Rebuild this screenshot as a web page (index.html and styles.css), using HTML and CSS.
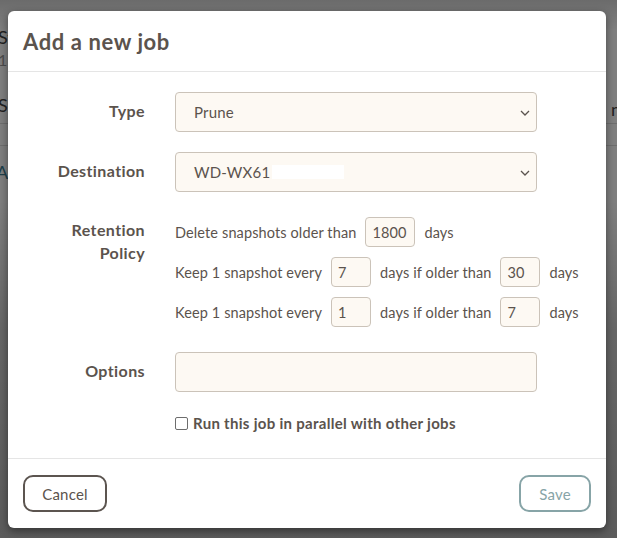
FILE: index.html
```html
<!DOCTYPE html>
<html>
<head>
<meta charset="utf-8">
<link rel="stylesheet" href="styles.css">
</head>
<body>
<div class="page">
  <div class="bg-left">
    <div class="bg-t1">St</div>
    <div class="bg-t2">1</div>
    <div class="bg-t3">Se</div>
    <div class="bg-line"></div>
    <div class="bg-line"></div>
    <div class="bg-t4">Ac</div>
  </div>
  <div class="bg-right">
    <div class="bg-r1">n</div>
  </div>
</div>
<div class="overlay"></div>
<div class="modal">
  <div class="modal-header">
    <h1 class="title">Add a new job</h1>
  </div>
  <div class="modal-body">
    <div class="row">
      <label class="label">Type</label>
      <div class="field">
        <div class="select"><span>Prune</span>
          <svg class="chev" viewBox="0 0 10 6" width="10" height="6"><path d="M1 1l4 4 4-4" fill="none" stroke="#5a534e" stroke-width="1.3"/></svg>
        </div>
      </div>
    </div>
    <div class="row">
      <label class="label">Destination</label>
      <div class="field">
        <div class="select"><span>WD-WX61</span><span class="redact"></span>
          <svg class="chev" viewBox="0 0 10 6" width="10" height="6"><path d="M1 1l4 4 4-4" fill="none" stroke="#5a534e" stroke-width="1.3"/></svg>
        </div>
      </div>
    </div>
    <div class="row row-ret">
      <label class="label label-ret">Retention Policy</label>
      <div class="ret">
        <div class="ret-line"><span>Delete snapshots older than</span><span class="num w50">1800</span><span>days</span></div>
        <div class="ret-line"><span>Keep 1 snapshot every</span><span class="num w40">7</span><span>days if older than</span><span class="num w40">30</span><span>days</span></div>
        <div class="ret-line"><span>Keep 1 snapshot every</span><span class="num w40">1</span><span>days if older than</span><span class="num w40">7</span><span>days</span></div>
      </div>
    </div>
    <div class="row row-opt">
      <label class="label">Options</label>
      <div class="field"><div class="select"></div></div>
    </div>
    <div class="check-row">
      <span class="checkbox"></span>
      <span class="check-text">Run this job in parallel with other jobs</span>
    </div>
  </div>
  <div class="modal-footer">
    <button class="btn btn-cancel">Cancel</button>
    <button class="btn btn-save">Save</button>
  </div>
</div>
</body>
</html>
```
FILE: styles.css
```css
* { box-sizing: border-box; }
html, body { margin: 0; padding: 0; }
body {
  width: 617px;
  height: 538px;
  overflow: hidden;
  position: relative;
  background: #ffffff;
  font-family: Lato, "Open Sans", sans-serif;
  color: #5b534d;
}
.page {
  position: absolute;
  inset: 0;
  background: #fff;
}
.bg-left {
  position: absolute;
  left: 0;
  top: 0;
  width: 40px;
  font-size: 18px;
  color: #444;
}
.bg-t1 { position: absolute; top: 26px; left: -2px; }
.bg-t2 { position: absolute; top: 50px; left: -2px; color: #999; font-size: 16px; }
.bg-t3 { position: absolute; top: 94px; left: -2px; }
.bg-t4 { position: absolute; top: 161px; left: -4px; color: #3d7f96; }
.bg-line { height: 1px; background: #ddd; width: 617px; position: absolute; left: 0; }
.bg-line:nth-child(4) { top: 123px; }
.bg-line:nth-child(5) { top: 145px; }
.bg-right { position: absolute; right: 0; top: 0; }
.bg-r1 { position: absolute; top: 98px; right: -4px; font-size: 18px; color: #444; }
.overlay {
  position: absolute;
  inset: 0;
  background: linear-gradient(to bottom, rgba(0,0,0,0.58) 0, rgba(0,0,0,0.5) 30px, rgba(0,0,0,0.5) 200px, rgba(0,0,0,0.6) 330px, rgba(0,0,0,0.64) 538px);
}
.modal {
  position: absolute;
  left: 8px;
  top: 11px;
  width: 598px;
  background: #fff;
  border-radius: 6px;
  box-shadow: 0 3px 9px rgba(0,0,0,0.45);
}
.modal-header {
  height: 61px;
  padding: 0 15px;
  display: flex;
  align-items: center;
  border-bottom: 1px solid #e5e5e5;
}
.title {
  margin: 0;
  font-size: 22px;
  font-weight: 700;
  color: #5b534d;
  letter-spacing: 0.6px;
}
.modal-body {
  padding: 20px 0 26px;
}
.row {
  display: grid;
  grid-template-columns: 137px 362px;
  column-gap: 30px;
  align-items: center;
  margin-bottom: 20px;
}
.label {
  text-align: right;
  font-weight: 700;
  font-size: 16px;
  letter-spacing: 0.4px;
  color: #5b534d;
  padding-bottom: 3px;
}
.select {
  height: 40px;
  border: 1px solid #cbc3b9;
  border-radius: 4px;
  background: #fdf9f3;
  display: flex;
  align-items: center;
  padding: 0 18px 1px;
  font-size: 15px;
  letter-spacing: 0.2px;
  position: relative;
}
.chev { position: absolute; right: 6px; top: 17px; }
.redact {
  display: inline-block;
  width: 72px;
  height: 14px;
  background: #fff;
  margin-left: 2px;
}
.row-ret {
  align-items: start;
  margin-top: 25px;
  margin-bottom: 25px;
}
.label-ret {
  line-height: 23px;
  padding-top: 1px;
  padding-left: 27px;
}
.ret {
  display: flex;
  flex-direction: column;
  gap: 10px;
  width: 420px;
}
.ret-line {
  display: flex;
  align-items: center;
  gap: 9px;
  font-size: 14.5px;
  letter-spacing: 0.12px;
  height: 30px;
  white-space: nowrap;
}
.num {
  height: 30px;
  border: 1px solid #cbc3b9;
  border-radius: 4px;
  background: #fdf9f3;
  display: flex;
  align-items: center;
  padding: 0 6px;
  font-size: 14.5px;
}
.w50 { width: 50px; }
.w40 { width: 40px; }
.row-opt { margin-bottom: 22px; }
.check-row {
  margin-left: 167px;
  display: flex;
  align-items: center;
  gap: 5px;
  height: 18px;
}
.checkbox {
  width: 13px;
  height: 13px;
  border: 1px solid #6d6d6d;
  border-radius: 2px;
  background: #fff;
}
.check-text {
  font-weight: 700;
  font-size: 15px;
  letter-spacing: 0.3px;
}
.modal-footer {
  border-top: 1px solid #e5e5e5;
  padding: 16px 15px;
  display: flex;
  justify-content: space-between;
}
.btn {
  height: 37px;
  border-radius: 10px;
  background: #fff;
  font-family: Lato, "Open Sans", sans-serif;
  font-size: 15px;
  letter-spacing: 0.2px;
  padding: 0;
}
.btn-cancel {
  width: 84px;
  border: 2px solid #5c5550;
  color: #5b534d;
}
.btn-save {
  width: 72px;
  border: 2px solid #87a4a7;
  color: #87a4a7;
}
```
